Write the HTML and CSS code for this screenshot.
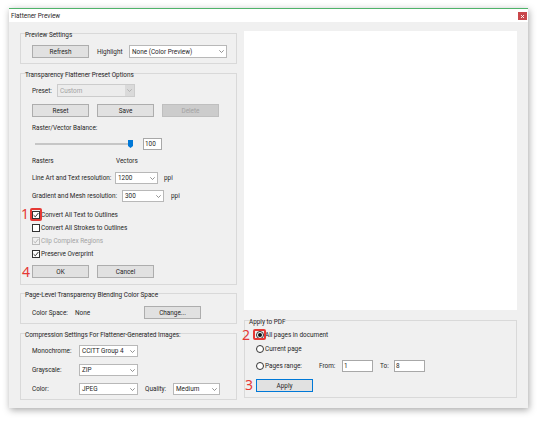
FILE: index.html
```html
<!DOCTYPE html>
<html>
<head>
<meta charset="utf-8">
<link rel="stylesheet" href="styles.css">
</head>
<body>
<div class="window">
  <div class="titlebar">
    <span class="title">Flattener Preview</span>
    <span class="close"><svg width="3" height="3" viewBox="0 0 3 3"><path d="M0 0L3 3M3 0L0 3" stroke="#fff" stroke-width="0.9"/></svg></span>
  </div>
  <div class="content">
    <div class="left">
      <div class="group g1">
        <div class="gtitle">Preview Settings</div>
        <div class="row r-refresh">
          <div class="btn">Refresh</div>
          <span class="lbl w-hl">Highlight</span>
          <div class="select w97"><span class="sv">None (Color Preview)</span><span class="chev"><svg width="5" height="3" viewBox="0 0 5 3"><path d="M0.3 0.3L2.5 2.5L4.7 0.3" fill="none" stroke="#777" stroke-width="0.8"/></svg></span></div>
        </div>
      </div>

      <div class="group g2">
        <div class="gtitle">Transparency Flattener Preset Options</div>
        <div class="row r-preset">
          <span class="lbl w-preset">Preset:</span>
          <div class="select disabled w77"><span class="sv">Custom</span><span class="chev"><svg width="5" height="3" viewBox="0 0 5 3"><path d="M0.3 0.3L2.5 2.5L4.7 0.3" fill="none" stroke="#aaa" stroke-width="0.8"/></svg></span></div>
        </div>
        <div class="row r-btns">
          <div class="btn">Reset</div>
          <div class="btn ml8">Save</div>
          <div class="btn ml8 btn-disabled">Delete</div>
        </div>
        <div class="row r-label">Raster/Vector Balance:</div>
        <div class="row r-slider">
          <div class="track"><span class="thumb"><svg width="5" height="8" viewBox="0 0 5 8"><path d="M0 0H5V6L2.5 8L0 6Z" fill="#0078d7"/></svg></span></div>
          <div class="input w19">100</div>
        </div>
        <div class="row r-label r-rv"><span class="w-rasters">Rasters</span><span>Vectors</span></div>
        <div class="row r-sel r-lineart">
          <span class="lbl w-lineart">Line Art and Text resolution:</span>
          <div class="select w43"><span class="sv">1200</span><span class="chev"><svg width="5" height="3" viewBox="0 0 5 3"><path d="M0.3 0.3L2.5 2.5L4.7 0.3" fill="none" stroke="#777" stroke-width="0.8"/></svg></span></div>
          <span class="ppi">ppi</span>
        </div>
        <div class="row r-sel r-gradient">
          <span class="lbl w-gradient">Gradient and Mesh resolution:</span>
          <div class="select w42"><span class="sv">300</span><span class="chev"><svg width="5" height="3" viewBox="0 0 5 3"><path d="M0.3 0.3L2.5 2.5L4.7 0.3" fill="none" stroke="#777" stroke-width="0.8"/></svg></span></div>
          <span class="ppi ppi2">ppi</span>
        </div>
        <div class="row r-check r-first">
          <span class="anno anno1">1</span><span class="mark mark1"></span>
          <span class="cb"><svg width="6" height="6" viewBox="0 0 6 6"><path d="M0.6 3.2L2.3 4.8L5.4 1" fill="none" stroke="#222" stroke-width="0.9"/></svg></span>
          <span class="ctext">Convert All Text to Outlines</span>
        </div>
        <div class="row r-check">
          <span class="cb"></span>
          <span class="ctext">Convert All Strokes to Outlines</span>
        </div>
        <div class="row r-check">
          <span class="cb cb-disabled"><svg width="6" height="6" viewBox="0 0 6 6"><path d="M0.6 3.2L2.3 4.8L5.4 1" fill="none" stroke="#b0b0b0" stroke-width="0.9"/></svg></span>
          <span class="ctext disabled-text">Clip Complex Regions</span>
        </div>
        <div class="row r-check">
          <span class="cb"><svg width="6" height="6" viewBox="0 0 6 6"><path d="M0.6 3.2L2.3 4.8L5.4 1" fill="none" stroke="#222" stroke-width="0.9"/></svg></span>
          <span class="ctext">Preserve Overprint</span>
        </div>
        <div class="row r-ok">
          <span class="anno anno4">4</span>
          <div class="btn">OK</div>
          <div class="btn ml8">Cancel</div>
        </div>
      </div>

      <div class="group g3">
        <div class="gtitle">Page-Level Transparency Blending Color Space</div>
        <div class="row r-cs">
          <span class="lbl w-cs">Color Space:</span>
          <span class="lbl w-none">None</span>
          <div class="btn">Change...</div>
        </div>
      </div>

      <div class="group g4">
        <div class="gtitle">Compression Settings For Flattener-Generated Images:</div>
        <div class="row r-comp r-comp1">
          <span class="lbl w-comp">Monochrome:</span>
          <div class="select w59"><span class="sv">CCITT Group 4</span><span class="chev"><svg width="5" height="3" viewBox="0 0 5 3"><path d="M0.3 0.3L2.5 2.5L4.7 0.3" fill="none" stroke="#777" stroke-width="0.8"/></svg></span></div>
        </div>
        <div class="row r-comp">
          <span class="lbl w-comp">Grayscale:</span>
          <div class="select w59"><span class="sv">ZIP</span><span class="chev"><svg width="5" height="3" viewBox="0 0 5 3"><path d="M0.3 0.3L2.5 2.5L4.7 0.3" fill="none" stroke="#777" stroke-width="0.8"/></svg></span></div>
        </div>
        <div class="row r-comp">
          <span class="lbl w-comp">Color:</span>
          <div class="select w59"><span class="sv">JPEG</span><span class="chev"><svg width="5" height="3" viewBox="0 0 5 3"><path d="M0.3 0.3L2.5 2.5L4.7 0.3" fill="none" stroke="#777" stroke-width="0.8"/></svg></span></div>
          <span class="lbl w-quality">Quality:</span>
          <div class="select w47"><span class="sv">Medium</span><span class="chev"><svg width="5" height="3" viewBox="0 0 5 3"><path d="M0.3 0.3L2.5 2.5L4.7 0.3" fill="none" stroke="#777" stroke-width="0.8"/></svg></span></div>
        </div>
      </div>
    </div>

    <div class="right">
      <div class="preview"></div>
      <div class="group apply">
        <div class="gtitle">Apply to PDF</div>
        <div class="row r-radio r-radio1">
          <span class="anno anno2">2</span><span class="mark mark2"></span>
          <span class="rb rb-on"><span class="dot"></span></span>
          <span class="ctext">All pages in document</span>
        </div>
        <div class="row r-radio r-radio2">
          <span class="rb"></span>
          <span class="ctext">Current page</span>
        </div>
        <div class="row r-range">
          <span class="rb"></span>
          <span class="ctext w-range">Pages range:</span>
          <span class="lbl w-from">From:</span>
          <div class="input w31">1</div>
          <span class="lbl w-to">To:</span>
          <div class="input w31">8</div>
        </div>
        <div class="row r-apply">
          <span class="anno anno3">3</span>
          <div class="btn btn-default">Apply</div>
        </div>
      </div>
    </div>
  </div>
</div>
</body>
</html>
```

FILE: styles.css
```css
* { box-sizing: border-box; }
html, body { margin: 0; padding: 0; background: #ffffff; }
body {
  font-family: Roboto, "Noto Sans", "Liberation Sans", sans-serif;
  font-size: 6.4px;
  color: #262626;
  width: 540px;
  height: 421px;
  overflow: hidden;
}
.window {
  margin: 8px 0 0 9px;
  width: 519px;
  height: 400px;
  background: #f0f0f0;
  box-shadow: 1px 2px 7px rgba(0,0,0,0.35);
  display: flex;
  flex-direction: column;
}
.titlebar {
  height: 14px;
  background: #ffffff;
  border-top: 1px solid #4fb36a;
  display: flex;
  align-items: center;
  justify-content: space-between;
  padding-left: 2px;
}
.title { line-height: 8px; }
.close {
  width: 9px;
  height: 8px;
  background: #c9474b;
  display: flex;
  align-items: center;
  justify-content: center;
  margin-right: 1px;
  margin-top: 1px;
}
.close svg { display: block; }
.content {
  flex: 1;
  display: flex;
  gap: 7px;
  padding: 9px 11px 0 11px;
}
.left { width: 217px; display: flex; flex-direction: column; }
.right { width: 273px; display: flex; flex-direction: column; }

.group {
  border: 1px solid #d9d9d9;
  padding: 0 0 0 11px;
  display: flex;
  flex-direction: column;
}
.gtitle {
  line-height: 8px;
  height: 8px;
  margin-top: -3px;
  margin-left: -7px;
  white-space: nowrap;
}
.g1 { margin-top: 2px; height: 31px; }
.g2 { margin-top: 9px; height: 212px; }
.g3 { margin-top: 8px; height: 31px; }
.g4 { margin-top: 9px; height: 67px; }

.row { display: flex; align-items: center; white-space: nowrap; position: relative; }
.lbl { flex: none; }

.btn {
  width: 57px;
  height: 13px;
  background: #e1e1e1;
  border: 1px solid #adadad;
  display: flex;
  align-items: center;
  justify-content: center;
  flex: none;
}
.btn-disabled { background: #cccccc; border-color: #bfbfbf; color: #a3a3a3; }
.btn-default { border-color: #0078d7; }
.ml8 { margin-left: 8px; }

.select {
  height: 12px;
  background: #ffffff;
  border: 1px solid #b8b8b8;
  display: flex;
  align-items: center;
  flex: none;
}
.select .sv { flex: 1; padding-left: 2px; overflow: hidden; }
.select .chev { width: 9px; height: 100%; display: flex; align-items: center; justify-content: center; }
.select .chev svg { display: block; }
.select.disabled { background: #ececec; border-color: #cccccc; color: #a3a3a3; }
.select.disabled .chev { background: #dadada; }
.w97 { width: 98px; height: 13px; }
.w77 { width: 78px; height: 13px; }
.w43 { width: 43px; }
.w42 { width: 42px; }
.w59 { width: 59px; }
.w47 { width: 47px; }

.input {
  height: 12px;
  background: #ffffff;
  border: 1px solid #a8a8a8;
  padding-left: 1px;
  display: flex;
  align-items: center;
  flex: none;
}
.w19 { width: 19px; }
.w31 { width: 31px; }

.w-hl { width: 32px; margin-left: 8px; }
.w-preset { width: 25px; }

.r-refresh { margin-top: 6px; height: 13px; }
.r-preset { margin-top: 5px; height: 13px; }
.r-btns { margin-top: 7px; height: 13px; }
.r-label { margin-top: 7px; height: 8px; line-height: 8px; }
.r-slider { margin-top: 6px; height: 12px; }
.track {
  margin-left: 3px;
  width: 96px;
  height: 2px;
  background: #c6c6c6;
  position: relative;
  flex: none;
}
.thumb { position: absolute; right: -2px; top: -3px; }
.thumb svg { display: block; }
.r-slider .input { margin-left: 12px; }
.w-rasters { width: 84px; }
.r-sel { height: 12px; }
.r-lineart { margin-top: 7px; }
.r-gradient { margin-top: 6px; }
.w-lineart { width: 83px; }
.w-gradient { width: 90px; }
.ppi { margin-left: 6px; }
.ppi2 { margin-left: 7px; }

.r-check { height: 13px; }
.r-first { margin-top: 6px; }
.cb {
  width: 8px;
  height: 8px;
  border: 1px solid #333333;
  background: #ffffff;
  display: flex;
  align-items: center;
  justify-content: center;
  flex: none;
}
.cb svg { display: block; }
.cb-disabled { border-color: #bcbcbc; background: #f0f0f0; }
.ctext { margin-left: 1px; }
.disabled-text { color: #a3a3a3; }

.r-ok { margin-top: 5px; height: 13px; }

.r-cs { margin-top: 7px; height: 13px; }
.w-cs { width: 43px; }
.w-none { width: 69px; }

.r-comp { margin-top: 7px; height: 12px; }
.r-comp1 { margin-top: 6px; }
.w-comp { width: 47px; }
.w-quality { width: 28px; margin-left: 7px; }

.preview { height: 279px; background: #ffffff; }
.apply { margin-top: 10px; height: 78px; }
.r-radio { height: 10px; margin-top: 4px; }
.rb {
  width: 8px;
  height: 8px;
  border: 1px solid #333333;
  border-radius: 50%;
  background: #ffffff;
  display: flex;
  align-items: center;
  justify-content: center;
  flex: none;
}
.rb .dot { width: 4px; height: 4px; border-radius: 50%; background: #111111; }
.r-range { margin-top: 6px; height: 12px; }
.w-range { width: 54px; }
.w-from { width: 23px; }
.w-to { width: 14px; margin-left: 7px; }
.r-apply { margin-top: 7px; height: 13px; }

.anno {
  position: absolute;
  color: #e53935;
  font-size: 14px;
  line-height: 14px;
  font-family: "Noto Sans", "Liberation Sans", sans-serif;
}
.anno1 { left: -11px; top: -1px; }
.anno4 { left: -10px; top: 0px; }
.anno2 { left: -14px; top: -2px; }
.anno3 { left: -11px; top: -1px; }
.mark {
  position: absolute;
  border: 2px solid #e53935;
  border-radius: 2px;
}
.mark1 { left: -2px; top: 0px; width: 12px; height: 13px; }
.mark2 { left: -3px; top: -1px; width: 13px; height: 11px; }
```
